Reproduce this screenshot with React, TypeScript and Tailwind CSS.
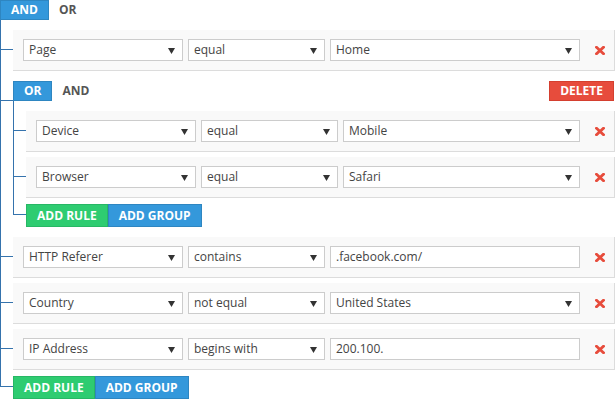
import type { ReactNode } from 'react'

type Rule = { kind: 'rule'; field: string; op: string; value: string; input?: boolean }
type Group = { kind: 'group'; cond: 'AND' | 'OR'; items: Item[]; root?: boolean }
type Item = Rule | Group

const tree: Group = {
  kind: 'group',
  cond: 'AND',
  root: true,
  items: [
    { kind: 'rule', field: 'Page', op: 'equal', value: 'Home' },
    {
      kind: 'group',
      cond: 'OR',
      items: [
        { kind: 'rule', field: 'Device', op: 'equal', value: 'Mobile' },
        { kind: 'rule', field: 'Browser', op: 'equal', value: 'Safari' },
      ],
    },
    { kind: 'rule', field: 'HTTP Referer', op: 'contains', value: '.facebook.com/', input: true },
    { kind: 'rule', field: 'Country', op: 'not equal', value: 'United States' },
    { kind: 'rule', field: 'IP Address', op: 'begins with', value: '200.100.', input: true },
  ],
}

function Arrow() {
  return (
    <svg width="7" height="7" viewBox="0 0 7 7" className="shrink-0">
      <polygon points="0,1 7,1 3.5,7" fill="#333" />
    </svg>
  )
}

function Cross() {
  return (
    <svg width="10" height="9" viewBox="0 0 10 9">
      <path d="M1.5 1.2 L8.5 7.8 M8.5 1.2 L1.5 7.8" stroke="#e74c3c" strokeWidth="2.8" strokeLinecap="square" />
    </svg>
  )
}

function Field({ text, input, className }: { text: string; input?: boolean; className: string }) {
  return (
    <div className={`h-[22px] border border-[#ccc] bg-white flex items-center pl-[5px] pr-[7px] ${className}`}>
      <span className="flex-1 truncate text-[12px] text-[#444]">{text}</span>
      {!input && <Arrow />}
    </div>
  )
}

function RuleRow({ rule }: { rule: Rule }) {
  return (
    <div className="h-[41px] bg-[#f9f9f9] border-b border-r border-[#dcdcdc] flex items-center pl-[10px] gap-[5px]">
      <Field text={rule.field} className="w-[160px] shrink-0" />
      <Field text={rule.op} className="w-[137px] shrink-0" />
      <Field text={rule.value} input={rule.input} className="flex-1 min-w-0" />
      <div className="w-[29px] shrink-0 flex justify-center">
        <Cross />
      </div>
    </div>
  )
}

function Branch({ pt, hook, last, children }: { pt: number; hook: number; last?: boolean; children: ReactNode }) {
  return (
    <div className="flex">
      <div className="w-[13px] shrink-0 flex flex-col">
        <div className="border-l border-b border-[#3573ad]" style={{ height: pt + hook }} />
        <div className={`flex-1 ${last ? '' : 'border-l border-[#3573ad]'}`} />
      </div>
      <div className="flex-1 min-w-0" style={{ paddingTop: pt }}>
        {children}
      </div>
    </div>
  )
}

function GroupBox({ group }: { group: Group }) {
  const other = group.cond === 'AND' ? 'OR' : 'AND'
  return (
    <div>
      <div className="h-[20px] flex items-center">
        <button className="h-[20px] px-[10px] bg-[#3498db] border border-[#2e86c1] text-white text-[12px] font-bold leading-none">
          {group.cond}
        </button>
        <span className="px-[10px] text-[12px] font-bold text-[#555]">{other}</span>
        {!group.root && (
          <button className="ml-auto mr-[1px] h-[20px] px-[10px] bg-[#e74c3c] border border-[#d43f2f] text-white text-[12px] font-bold leading-none">
            DELETE
          </button>
        )}
      </div>
      <div>
        {group.items.map((item, i) => {
          const prev = group.items[i - 1]
          const pt = i > 0 && prev.kind === 'rule' && item.kind === 'rule' ? 5 : 10
          return (
            <Branch key={i} pt={pt} hook={20}>
              {item.kind === 'rule' ? <RuleRow rule={item} /> : <GroupBox group={item} />}
            </Branch>
          )
        })}
        <Branch pt={6} hook={11} last>
          <div className="flex">
            <button className="h-[23px] px-[10px] bg-[#2ecc71] border border-[#27b765] text-white text-[12px] font-bold leading-none">
              ADD RULE
            </button>
            <button className="h-[23px] px-[10px] bg-[#3498db] border border-[#2e86c1] text-white text-[12px] font-bold leading-none">
              ADD GROUP
            </button>
          </div>
        </Branch>
      </div>
    </div>
  )
}

export default function App() {
  return (
    <div className="w-[615px] h-[399px] overflow-hidden bg-white" style={{ fontFamily: '"Open Sans", sans-serif' }}>
      <GroupBox group={tree} />
    </div>
  )
}
